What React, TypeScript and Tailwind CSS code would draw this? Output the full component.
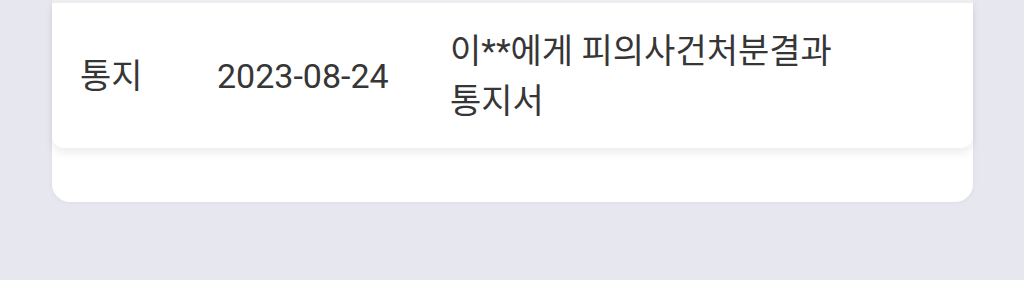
const rows = [
  {
    type: "통지",
    date: "2023-08-24",
    title: "이**에게 피의사건처분결과 통지서",
  },
];

export default function App() {
  return (
    <div
      className="bg-white"
      style={{ fontFamily: 'Roboto, "Noto Sans CJK KR", sans-serif' }}
    >
      <div className="h-[280px] bg-[#e7e7f0] pl-[52px] pr-[51px]">
        <div className="bg-white rounded-b-[18px] shadow-[0_0_6px_rgba(0,0,0,0.05)] pb-[54px]">
          <div className="h-[3px] bg-[#ededf2]" />
          {rows.map((r) => (
            <div
              key={r.date}
              className="h-[145px] flex items-center bg-white rounded-b-xl shadow-[0_5px_8px_rgba(0,0,0,0.07)] pl-[28px] text-[34px] leading-[50px] text-[#363636]"
            >
              <div className="w-[137px] shrink-0">{r.type}</div>
              <div className="w-[233px] shrink-0">{r.date}</div>
              <div className="w-[400px]">{r.title}</div>
            </div>
          ))}
        </div>
      </div>
    </div>
  );
}
